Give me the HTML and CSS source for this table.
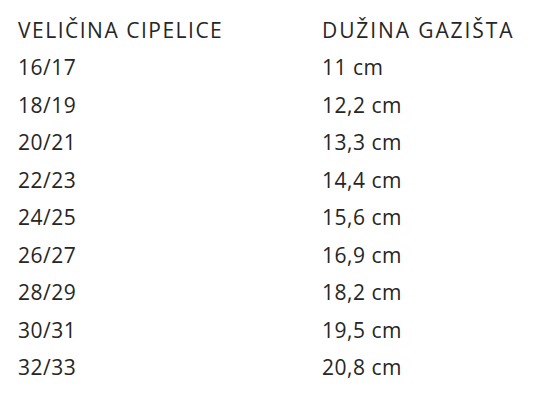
FILE: index.html
```html
<!DOCTYPE html>
<html lang="hr">
<head>
<meta charset="utf-8">
<link rel="stylesheet" href="styles.css">
</head>
<body>
<div class="size-table">
  <div class="cell head">VELIČINA CIPELICE</div><div class="cell head head-wide">DUŽINA GAZIŠTA</div>
  <div class="cell">16/17</div><div class="cell">11 cm</div>
  <div class="cell">18/19</div><div class="cell">12,2 cm</div>
  <div class="cell">20/21</div><div class="cell">13,3 cm</div>
  <div class="cell">22/23</div><div class="cell">14,4 cm</div>
  <div class="cell">24/25</div><div class="cell">15,6 cm</div>
  <div class="cell">26/27</div><div class="cell">16,9 cm</div>
  <div class="cell">28/29</div><div class="cell">18,2 cm</div>
  <div class="cell">30/31</div><div class="cell">19,5 cm</div>
  <div class="cell">32/33</div><div class="cell">20,8 cm</div>
</div>
</body>
</html>
```
FILE: styles.css
```css
html, body {
  margin: 0;
  background: #ffffff;
}
body {
  font-family: "Open Sans", "Noto Sans", sans-serif;
  font-size: 21px;
  color: #262626;
}
.size-table {
  display: grid;
  grid-template-columns: 304px 1fr;
  grid-auto-rows: 37.5px;
  padding: 11.5px 0 0 18px;
}
.cell {
  line-height: 37.5px;
  white-space: nowrap;
  letter-spacing: 0.5px;
}
.cell.head {
  letter-spacing: 1.5px;
}
.cell.head-wide {
  letter-spacing: 1.9px;
}
```
